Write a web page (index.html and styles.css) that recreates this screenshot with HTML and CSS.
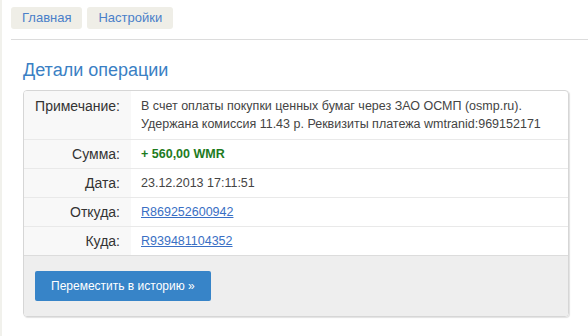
FILE: index.html
```html
<!DOCTYPE html>
<html lang="ru">
<head>
    <meta charset="UTF-8">
    <meta name="viewport" content="width=device-width, initial-scale=1.0">
    <title>Детали операции</title>
    <link rel="stylesheet" href="styles.css">
</head>
<body>

    <div class="nav">
        <a href="#" class="nav-tab">Главная</a>
        <a href="#" class="nav-tab">Настройки</a>
    </div>

    <div class="content">
        <h1>Детали операции</h1>

        <div class="panel">
            <table class="details">
                <tr>
                    <th>Примечание:</th>
                    <td>В счет оплаты покупки ценных бумаг через ЗАО ОСМП (osmp.ru).<br>Удержана комиссия 11.43 р. Реквизиты платежа wmtranid:969152171</td>
                </tr>
                <tr>
                    <th>Сумма:</th>
                    <td class="amount">+ 560,00 WMR</td>
                </tr>
                <tr>
                    <th>Дата:</th>
                    <td>23.12.2013 17:11:51</td>
                </tr>
                <tr>
                    <th>Откуда:</th>
                    <td><a href="#">R869252600942</a></td>
                </tr>
                <tr>
                    <th>Куда:</th>
                    <td><a href="#">R939481104352</a></td>
                </tr>
            </table>

            <div class="panel-footer">
                <button type="button" class="btn">Переместить в историю &raquo;</button>
            </div>
        </div>
    </div>

</body>
</html>
```

FILE: styles.css
```css
body {
    font-family: 'Liberation Sans', Arial, sans-serif;
    font-size: 12px;
    background-color: #fff;
    color: #333;
    margin: 0;
    padding: 0;
    border-left: 2px solid #f1f1ec;
    min-height: 336px;
    box-sizing: border-box;
}

.nav {
    display: flex;
    gap: 5px;
    margin-left: 9px;
    padding: 7px 0 10px;
    border-bottom: 1px solid #dcdcdc;
}

.nav-tab {
    display: block;
    height: 22px;
    line-height: 22px;
    padding: 0 11px;
    font-size: 13px;
    color: #4a7fc9;
    text-decoration: none;
    background-color: #efeee7;
    border-radius: 3px;
}

.content {
    padding: 0 19px 0 21px;
}

h1 {
    font-size: 18px;
    font-weight: normal;
    color: #3a7fc4;
    margin: 19px 0 9px;
    line-height: 22px;
}

.panel {
    border: 1px solid #d6d6d6;
    border-radius: 4px;
    box-shadow: 1px 1px 1px rgba(0, 0, 0, 0.12);
    overflow: hidden;
}

.details {
    width: 100%;
    border-collapse: collapse;
}

    .details th,
    .details td {
        padding: 5px 10px;
        line-height: 18px;
        font-size: 12.5px;
        text-align: left;
        vertical-align: top;
        border-top: 1px solid #e9e9e9;
    }

    .details tr:first-child th,
    .details tr:first-child td {
        border-top: none;
        padding-top: 6px;
        padding-bottom: 6px;
    }

    .details th {
        width: 86px;
        font-size: 14px;
        font-weight: normal;
        text-align: right;
        padding-right: 11px;
        color: #333;
        background-color: #f8f8f8;
    }

    .details td {
        color: #444;
    }

    .details a {
        color: #3a6fc4;
    }

    .details .amount {
        color: #1e7b1e;
        font-weight: bold;
    }

.panel-footer {
    background-color: #eee;
    border-top: 1px solid #dcdcdc;
    padding: 15px 11px 15px;
}

.btn {
    font-family: 'Liberation Sans', Arial, sans-serif;
    font-size: 12px;
    color: #fff;
    background-color: #3784c8;
    border: none;
    border-radius: 2px;
    height: 30px;
    padding: 0 16px;
    cursor: pointer;
}
```
